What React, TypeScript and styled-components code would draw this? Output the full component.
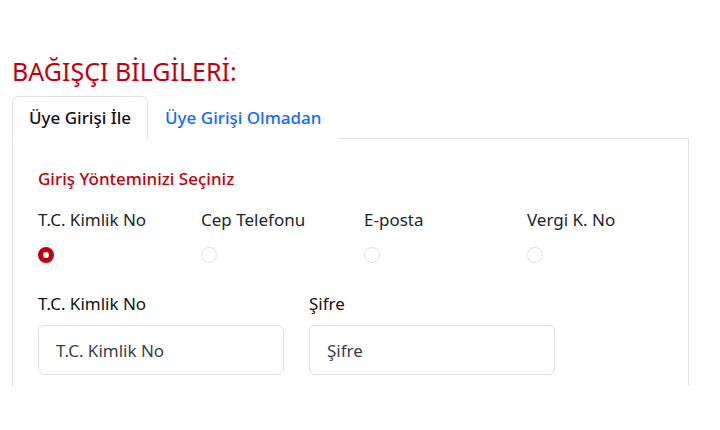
import React, { useState } from 'react';
import styled, { createGlobalStyle } from 'styled-components';

const RED = '#c1000f';
const BORDER = '#dee2e6';

const GlobalStyle = createGlobalStyle`
  body {
    margin: 0;
    background: #fff;
    font-family: 'Noto Sans', 'Open Sans', sans-serif;
    color: #212529;
  }
`;

const Page = styled.div`
  padding: 52px 31px 0 12px;
  width: 720px;
  box-sizing: border-box;
`;

const Title = styled.h1`
  margin: 0 0 6px;
  font-size: 25px;
  font-weight: 400;
  line-height: 38px;
  color: ${RED};
`;

const TabList = styled.div`
  display: flex;
  border-bottom: 1px solid ${BORDER};
`;

const Tab = styled.button<{ $active?: boolean }>`
  margin-bottom: -1px;
  padding: 0 16px;
  height: 43px;
  border: 1px solid ${(p) => (p.$active ? BORDER : 'transparent')};
  border-bottom-color: ${(p) => (p.$active ? '#fff' : 'transparent')};
  border-radius: 6px 6px 0 0;
  background: #fff;
  font-family: inherit;
  font-size: 17px;
  font-weight: 500;
  color: ${(p) => (p.$active ? '#111' : '#0d6efd')};
  cursor: pointer;
`;

const Panel = styled.div`
  height: 247px;
  padding: 28px 25px 0;
  border-left: 1px solid ${BORDER};
  border-right: 1px solid ${BORDER};
  box-sizing: border-box;
`;

const Subtitle = styled.h2`
  margin: 0 0 17px;
  font-size: 17px;
  font-weight: 500;
  line-height: 24px;
  color: ${RED};
`;

const MethodGrid = styled.div`
  display: grid;
  grid-template-columns: repeat(4, 163px);
`;

const Method = styled.label`
  display: flex;
  flex-direction: column;
  gap: 15px;
  font-size: 17px;
  line-height: 24px;
  cursor: pointer;
`;

const Radio = styled.span<{ $checked?: boolean }>`
  width: 16px;
  height: 16px;
  box-sizing: border-box;
  border-radius: 50%;
  background: #fff;
  border: ${(p) => (p.$checked ? `5px solid ${RED}` : `1px solid ${BORDER}`)};
`;

const FieldRow = styled.div`
  display: flex;
  gap: 25px;
  margin-top: 29px;
`;

const Field = styled.div`
  display: flex;
  flex-direction: column;
  gap: 9px;
  width: 246px;
`;

const FieldLabel = styled.label`
  font-size: 17px;
  line-height: 24px;
  color: #111;
`;

const Input = styled.input`
  height: 50px;
  padding: 0 17px;
  box-sizing: border-box;
  border: 1px solid ${BORDER};
  border-radius: 6px;
  font-family: inherit;
  font-size: 17px;
  color: #333;
  outline: none;
  &::placeholder {
    color: #3a3f44;
  }
`;

const methods = ['T.C. Kimlik No', 'Cep Telefonu', 'E-posta', 'Vergi K. No'];

export default function App() {
  const [tab, setTab] = useState(0);
  const [method, setMethod] = useState(0);
  return (
    <>
      <GlobalStyle />
      <Page>
        <Title>BAĞIŞÇI BİLGİLERİ:</Title>
        <TabList>
          <Tab $active={tab === 0} onClick={() => setTab(0)}>Üye Girişi İle</Tab>
          <Tab $active={tab === 1} onClick={() => setTab(1)}>Üye Girişi Olmadan</Tab>
        </TabList>
        <Panel>
          <Subtitle>Giriş Yönteminizi Seçiniz</Subtitle>
          <MethodGrid>
            {methods.map((m, i) => (
              <Method key={m} onClick={() => setMethod(i)}>
                {m}
                <Radio $checked={method === i} />
              </Method>
            ))}
          </MethodGrid>
          <FieldRow>
            <Field>
              <FieldLabel>{methods[method]}</FieldLabel>
              <Input placeholder={methods[method]} />
            </Field>
            <Field>
              <FieldLabel>Şifre</FieldLabel>
              <Input type="password" placeholder="Şifre" />
            </Field>
          </FieldRow>
        </Panel>
      </Page>
    </>
  );
}
